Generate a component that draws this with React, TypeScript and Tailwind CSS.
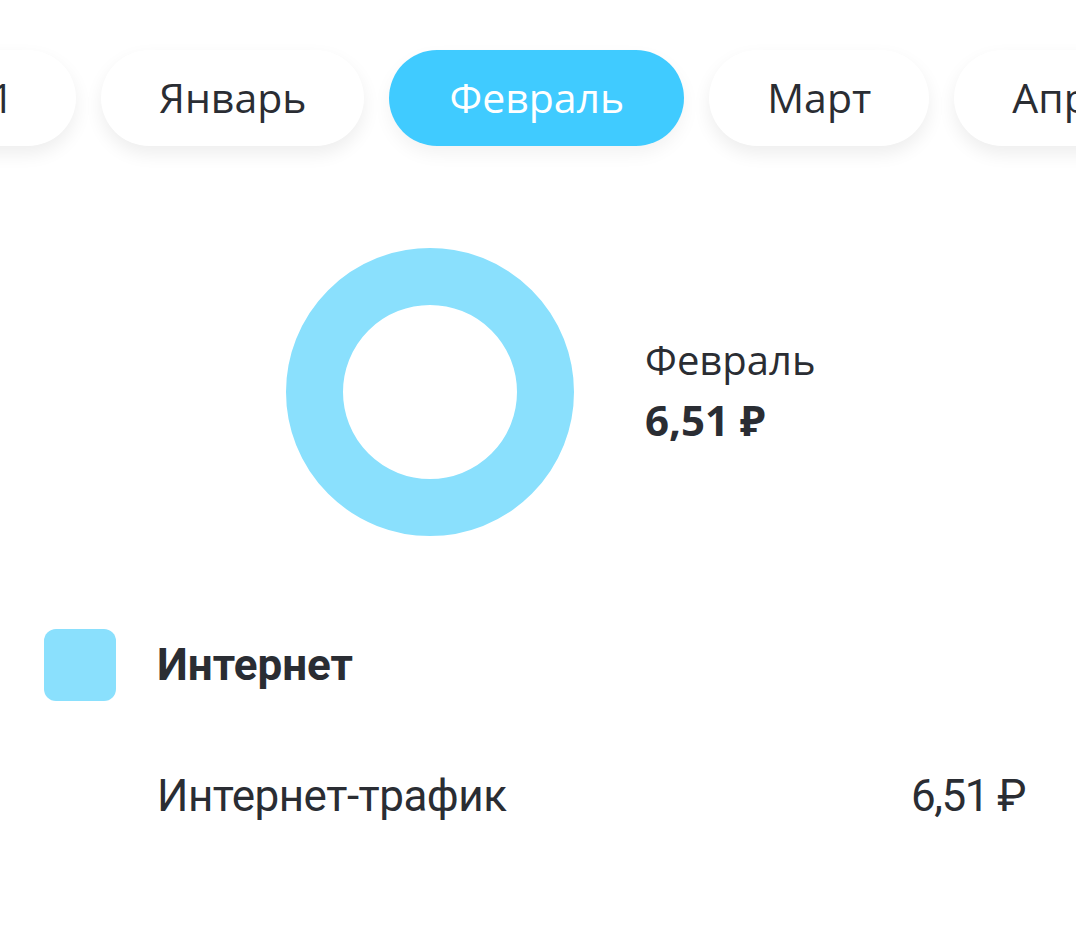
import React from 'react';

const months = ['Январь', 'Февраль', 'Март', 'Апрель', 'Май'];
const ACTIVE = 'Февраль';

const Donut: React.FC = () => (
  <svg width="288" height="288" viewBox="0 0 288 288">
    <circle cx="144" cy="144" r="115.5" fill="none" stroke="#8ae0fd" strokeWidth="57" />
  </svg>
);

export default function App() {
  return (
    <div className="w-[1076px] h-[944px] bg-white overflow-hidden text-[#2a2d33] font-['Open_Sans','Noto_Sans',sans-serif]">
      {/* Month tabs */}
      <div className="flex gap-[25px] pt-[50px] pb-[20px] ml-[-124px] whitespace-nowrap">
        <div className="w-[200px] h-[96px] shrink-0 rounded-full bg-white shadow-[0_8px_18px_rgba(0,0,0,0.07)] flex items-center justify-end pr-[62px] text-[41px]">
          2021
        </div>
        {months.map((m) => (
          <div
            key={m}
            className={
              m === ACTIVE
                ? 'h-[96px] shrink-0 rounded-full bg-[#40cbff] text-white px-[60px] flex items-center text-[41px] shadow-[0_8px_18px_rgba(0,0,0,0.05)]'
                : 'h-[96px] shrink-0 rounded-full bg-white px-[58px] flex items-center text-[41px] shadow-[0_8px_18px_rgba(0,0,0,0.07)]'
            }
          >
            {m}
          </div>
        ))}
      </div>

      {/* Chart */}
      <div className="flex items-center pl-[286px] mt-[82px]">
        <Donut />
        <div className="ml-[71px] flex flex-col">
          <span className="text-[40px] leading-[56px]">Февраль</span>
          <span className="text-[42px] leading-[64px] font-bold">6,51 ₽</span>
        </div>
      </div>

      {/* Legend */}
      <div className="flex items-center pl-[44px] mt-[93px]">
        <div className="w-[72px] h-[72px] rounded-[12px] bg-[#8ae0fd]" />
        <span className="ml-[41px] text-[44px] font-bold font-['Roboto',sans-serif]">Интернет</span>
      </div>

      <div className="flex items-center justify-between pl-[157px] pr-[51px] mt-[62px] text-[44px] tracking-[-0.5px] font-['Roboto',sans-serif]">
        <span>Интернет-трафик</span>
        <span className="tracking-[-1.5px]">6,51 ₽</span>
      </div>
    </div>
  );
}
